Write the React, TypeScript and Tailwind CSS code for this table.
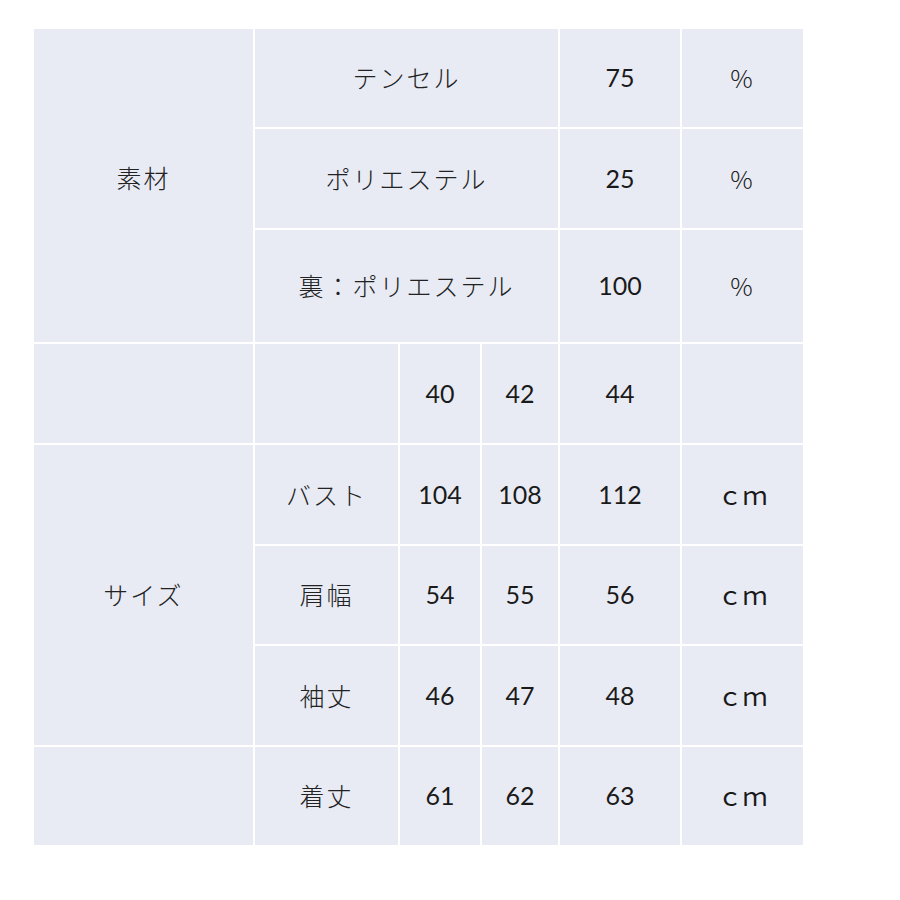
const jp = "font-['Noto_Sans_CJK_JP',sans-serif] font-light text-[25px] tracking-[2px] text-[#222]"
const num = "font-['Lato','Noto_Sans_CJK_JP',sans-serif] text-[25px] text-[#1a1a1a]"
const unit = "font-['Noto_Sans_CJK_JP',sans-serif] text-[25px] text-[#1a1a1a]"
const cell = "border-2 border-white text-center align-middle p-0"

const sizes = [
  { label: "バスト", v: ["104", "108", "112"] },
  { label: "肩幅", v: ["54", "55", "56"] },
  { label: "袖丈", v: ["46", "47", "48"] },
  { label: "着丈", v: ["61", "62", "63"] },
]

const materials = [
  { name: "テンセル", pct: "75", h: "h-[100px]" },
  { name: "ポリエステル", pct: "25", h: "h-[101px]" },
  { name: "裏：ポリエステル", pct: "100", h: "h-[114px]" },
]

export default function App() {
  return (
    <div className="min-h-[900px] w-[900px] bg-white pt-[27px] pl-[32px]">
      <table className="table-fixed border-collapse bg-[#e8ebf4] w-[771px]">
        <colgroup>
          <col className="w-[221px]" />
          <col className="w-[145px]" />
          <col className="w-[82px]" />
          <col className="w-[78px]" />
          <col className="w-[122px]" />
          <col className="w-[123px]" />
        </colgroup>
        <tbody>
          {materials.map((m, i) => (
            <tr key={m.name} className={m.h}>
              {i === 0 && (
                <td rowSpan={3} className={`${cell} ${jp} pb-[15px]`}>
                  素材
                </td>
              )}
              <td colSpan={3} className={`${cell} ${jp}`}>
                {m.name}
              </td>
              <td className={`${cell} ${num}`}>{m.pct}</td>
              <td className={`${cell} ${jp}`}>%</td>
            </tr>
          ))}
          <tr className="h-[101px]">
            <td className={cell} />
            <td className={cell} />
            <td className={`${cell} ${num}`}>40</td>
            <td className={`${cell} ${num}`}>42</td>
            <td className={`${cell} ${num}`}>44</td>
            <td className={cell} />
          </tr>
          {sizes.map((s, i) => (
            <tr key={s.label} className={i === 1 || i === 3 ? "h-[100px]" : "h-[101px]"}>
              {i === 0 && (
                <td rowSpan={3} className={`${cell} ${jp}`}>
                  サイズ
                </td>
              )}
              {i === 3 && <td className={cell} />}
              <td className={`${cell} ${jp}`}>{s.label}</td>
              {s.v.map((v, j) => (
                <td key={j} className={`${cell} ${num}`}>
                  {v}
                </td>
              ))}
              <td className={`${cell} ${unit}`}>ｃｍ</td>
            </tr>
          ))}
        </tbody>
      </table>
    </div>
  )
}
